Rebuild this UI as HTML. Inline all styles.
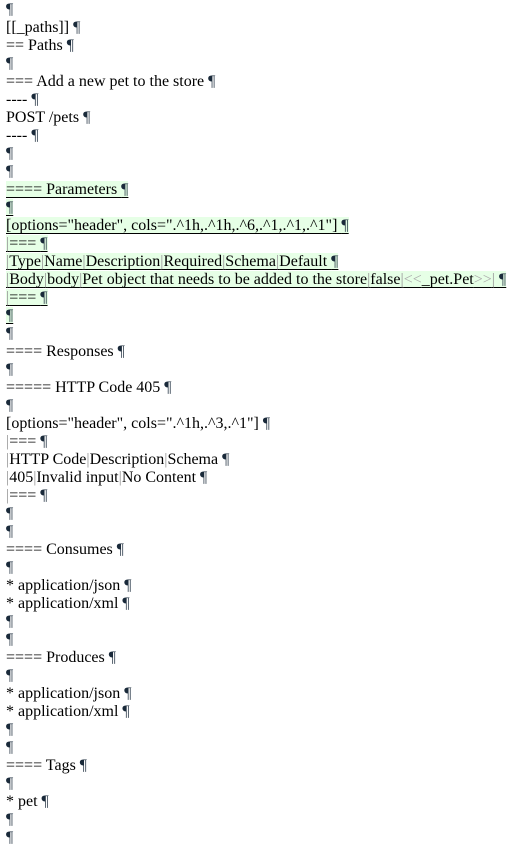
<!DOCTYPE html>
<html><head><meta charset="utf-8"><style>
html,body{margin:0;padding:0;background:#fff;}
body{width:518px;height:842px;overflow:hidden;font-family:"Liberation Serif","Times New Roman",serif;font-size:16px;color:#000;}
.w{position:absolute;left:6px;top:1px;}
.l{height:18px;line-height:18px;white-space:pre;}
.p{color:#1a2a3a;}
.g{color:#999;}
.a{background:#e6ffe6;text-decoration:underline;text-underline-offset:3px;}
.lg{color:#aaa;}
</style></head><body><div class="w">
<div class="l"><span class="p">¶</span></div>
<div class="l">[[_paths]] <span class="p">¶</span></div>
<div class="l">== Paths <span class="p">¶</span></div>
<div class="l"><span class="p">¶</span></div>
<div class="l">=== Add a new pet to the store <span class="p">¶</span></div>
<div class="l">---- <span class="p">¶</span></div>
<div class="l">POST /pets <span class="p">¶</span></div>
<div class="l">---- <span class="p">¶</span></div>
<div class="l"><span class="p">¶</span></div>
<div class="l"><span class="p">¶</span></div>
<div class="l"><span class="a">==== Parameters <span class="p">¶</span></span></div>
<div class="l"><span class="a"><span class="p">¶</span></span></div>
<div class="l"><span class="a">[options="header", cols=".^1h,.^1h,.^6,.^1,.^1,.^1"] <span class="p">¶</span></span></div>
<div class="l"><span class="a"><span class="g">|</span>=== <span class="p">¶</span></span></div>
<div class="l"><span class="a"><span class="g">|</span>Type<span class="g">|</span>Name<span class="g">|</span>Description<span class="g">|</span>Required<span class="g">|</span>Schema<span class="g">|</span>Default <span class="p">¶</span></span></div>
<div class="l"><span class="a"><span class="g">|</span>Body<span class="g">|</span>body<span class="g">|</span>Pet object that needs to be added to the store<span class="g">|</span>false<span class="g">|</span><span class="lg">&lt;&lt;</span>_pet.Pet<span class="lg">&gt;&gt;</span><span class="g">|</span> <span class="p">¶</span></span></div>
<div class="l"><span class="a"><span class="g">|</span>=== <span class="p">¶</span></span></div>
<div class="l"><span class="a"><span class="p">¶</span></span></div>
<div class="l"><span class="p">¶</span></div>
<div class="l">==== Responses <span class="p">¶</span></div>
<div class="l"><span class="p">¶</span></div>
<div class="l">===== HTTP Code 405 <span class="p">¶</span></div>
<div class="l"><span class="p">¶</span></div>
<div class="l">[options="header", cols=".^1h,.^3,.^1"] <span class="p">¶</span></div>
<div class="l"><span class="g">|</span>=== <span class="p">¶</span></div>
<div class="l"><span class="g">|</span>HTTP Code<span class="g">|</span>Description<span class="g">|</span>Schema <span class="p">¶</span></div>
<div class="l"><span class="g">|</span>405<span class="g">|</span>Invalid input<span class="g">|</span>No Content <span class="p">¶</span></div>
<div class="l"><span class="g">|</span>=== <span class="p">¶</span></div>
<div class="l"><span class="p">¶</span></div>
<div class="l"><span class="p">¶</span></div>
<div class="l">==== Consumes <span class="p">¶</span></div>
<div class="l"><span class="p">¶</span></div>
<div class="l">* application/json <span class="p">¶</span></div>
<div class="l">* application/xml <span class="p">¶</span></div>
<div class="l"><span class="p">¶</span></div>
<div class="l"><span class="p">¶</span></div>
<div class="l">==== Produces <span class="p">¶</span></div>
<div class="l"><span class="p">¶</span></div>
<div class="l">* application/json <span class="p">¶</span></div>
<div class="l">* application/xml <span class="p">¶</span></div>
<div class="l"><span class="p">¶</span></div>
<div class="l"><span class="p">¶</span></div>
<div class="l">==== Tags <span class="p">¶</span></div>
<div class="l"><span class="p">¶</span></div>
<div class="l">* pet <span class="p">¶</span></div>
<div class="l"><span class="p">¶</span></div>
<div class="l"><span class="p">¶</span></div>
</div></body></html>
